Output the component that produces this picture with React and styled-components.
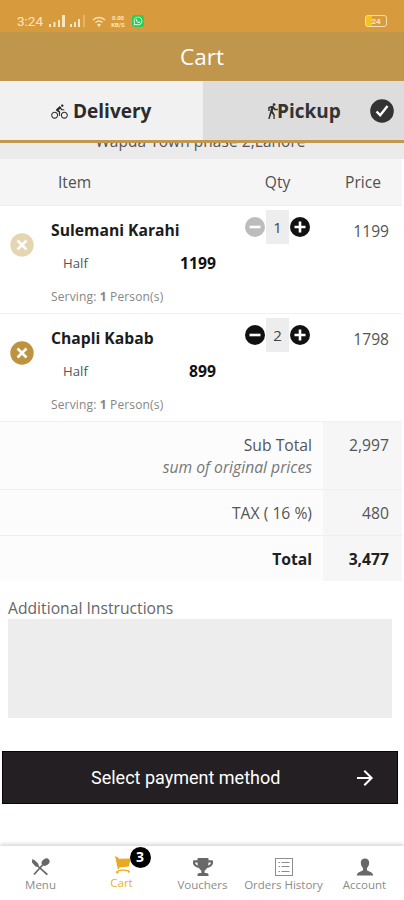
import React from "react";
import styled, { createGlobalStyle } from "styled-components";
import { IoMdBicycle, IoMdWalk, IoMdArrowForward } from "react-icons/io";
import { FaTrophy, FaWhatsapp } from "react-icons/fa";

const GlobalStyle = createGlobalStyle`
  * {
    box-sizing: border-box;
  }
  body {
    margin: 0;
    background: #ffffff;
    font-family: "Open Sans", "Noto Sans", sans-serif;
    color: #555555;
  }
`;

const Screen = styled.div`
  width: 404px;
  height: 900px;
  display: flex;
  flex-direction: column;
  overflow: hidden;
  background: #ffffff;
`;

const StatusBar = styled.div`
  height: 32px;
  flex: none;
  display: flex;
  align-items: center;
  padding: 10px 17px 0;
  background: #d79b3d;
  color: #fbe6bd;
`;

const Clock = styled.span`
  width: 32px;
  font-family: Roboto, sans-serif;
  font-size: 13.5px;
  line-height: 14px;
`;

const Signals = styled.svg`
  width: 58px;
  height: 16px;
`;

const NetSpeed = styled.span`
  display: flex;
  flex-direction: column;
  align-items: center;
  width: 16px;
  margin-left: 3px;
  font-family: Roboto, sans-serif;
  font-size: 6px;
  font-weight: 700;
  line-height: 7px;
`;

const WhatsappBadge = styled.span`
  display: flex;
  align-items: center;
  justify-content: center;
  width: 12px;
  height: 12px;
  margin-left: 6px;
  border-radius: 3px;
  background: #26cf56;
  color: #ffffff;
  font-size: 10px;
`;

const Battery = styled.span`
  display: flex;
  align-items: center;
  justify-content: center;
  width: 22px;
  height: 12px;
  margin-left: auto;
  border: 1px solid #f7dfae;
  border-radius: 3px;
  background: linear-gradient(90deg, #f2c31c 30%, transparent 30%);
  font-family: Roboto, sans-serif;
  font-size: 8px;
  font-weight: 700;
`;

const TitleBar = styled.h1`
  height: 49px;
  flex: none;
  margin: 0;
  background: #c0964c;
  color: #ffffff;
  font-size: 22.5px;
  font-weight: 400;
  line-height: 49px;
  text-align: center;
`;

const Tabs = styled.div`
  display: grid;
  grid-template-columns: 203px 201px;
  height: 62px;
  flex: none;
  border-bottom: 3px solid #c3984e;
`;

const Tab = styled.div`
  display: flex;
  align-items: center;
  padding: 1px ${(props) => (props.$active ? "10px 0 61px" : "0 0 50px")};
  background: ${(props) => (props.$active ? "#dddddd" : "#f1f1f1")};
  color: ${(props) => (props.$active ? "#333333" : "#2b2b2b")};
  font-size: 19px;
  font-weight: 700;

  svg {
    flex: none;
  }
`;

const TabLabel = styled.span`
  margin-left: ${(props) => props.$gap || 0}px;
`;

const TabCheck = styled.svg`
  width: 24px;
  height: 24px;
  margin-left: auto;
`;

const Address = styled.div`
  display: flex;
  align-items: flex-end;
  justify-content: center;
  height: 16px;
  flex: none;
  padding: 0 3px 8px 0;
  overflow: hidden;
  background: #ebebeb;
  color: #555555;
  font-size: 15.4px;
  line-height: 18px;
  letter-spacing: 0.1px;
`;

const Table = styled.div`
  width: 402px;
  flex: none;
`;

const TableHead = styled.div`
  display: grid;
  grid-template-columns: 58px 179px 81px 84px;
  align-items: center;
  height: 47px;
  border-bottom: 1px solid #f0f0f0;
  background: #f5f5f5;
  color: #505050;
  font-size: 15.6px;
`;

const HeadCell = styled.span`
  padding-left: ${(props) => props.$inset || 0}px;
  text-align: ${(props) => props.$align || "left"};
`;

const ItemRow = styled.div`
  display: grid;
  grid-template-columns: 51px 165px 103px 83px;
  height: 108px;
  border-bottom: 1px solid #f0f0f0;
`;

const RemoveCell = styled.div`
  padding: 27px 0 0 10px;

  svg {
    display: block;
  }
`;

const ItemInfo = styled.div`
  padding-top: 13px;
`;

const ItemName = styled.div`
  color: #1c1c1c;
  font-size: 15.7px;
  font-weight: 700;
  line-height: 22px;
  white-space: nowrap;
`;

const Portion = styled.div`
  display: flex;
  align-items: center;
  justify-content: space-between;
  height: 22px;
  margin-top: 11px;
  padding-left: 12px;
  font-size: 13.2px;
`;

const PortionPrice = styled.strong`
  color: #111111;
  font-size: 15.7px;
`;

const Serving = styled.div`
  margin-top: 15px;
  color: #868686;
  font-size: 12px;
  line-height: 16px;
  letter-spacing: 0.15px;
`;

const Stepper = styled.div`
  display: flex;
  align-items: flex-start;
  padding: 4px 0 0 29px;

  svg {
    flex: none;
    margin-top: 7px;
  }
`;

const Quantity = styled.span`
  width: 23px;
  height: 34px;
  margin: 0 1px;
  background: #ededed;
  color: #444444;
  font-size: 15px;
  line-height: 34px;
  text-align: center;
`;

const LinePrice = styled.div`
  padding: 14px 13px 0 0;
  font-size: 15.6px;
  line-height: 22px;
  text-align: right;
`;

const TotalRow = styled.div`
  display: grid;
  grid-template-columns: 323px 79px;
  height: ${(props) => props.$height}px;
  border-bottom: ${(props) => (props.$strong ? 0 : 1)}px solid #efefef;
  background: #fcfcfc;
  color: ${(props) => (props.$strong ? "#202020" : "#555555")};
  font-size: 15.7px;
  font-weight: ${(props) => (props.$strong ? 700 : 400)};
  line-height: 22px;
`;

const TotalLabel = styled.div`
  padding: 12px 11px 0 0;
  text-align: right;
`;

const TotalValue = styled.div`
  padding: 12px 13px 0 0;
  background: #f6f6f6;
  text-align: right;
`;

const Note = styled.em`
  display: block;
  color: #777777;
  font-size: 15.7px;
`;

const Instructions = styled.label`
  display: block;
  flex: none;
  padding: 16px 12px 0 8px;
  color: #666666;
  font-size: 15.7px;
  line-height: 22px;
`;

const InstructionsInput = styled.textarea`
  display: block;
  width: 384px;
  height: 99px;
  border: 0;
  background: #ededed;
  outline: none;
  resize: none;
`;

const PaymentButton = styled.button`
  display: grid;
  grid-template-columns: 1fr 24px;
  align-items: center;
  width: 396px;
  height: 53px;
  flex: none;
  margin: 33px 0 0 2px;
  padding: 0 20px 0 0;
  border: 1px solid #080608;
  background: #241f22;
  color: #ffffff;
  font-family: Roboto, sans-serif;
  font-size: 18px;
  text-align: left;
`;

const PaymentLabel = styled.span`
  padding-left: 88px;
`;

const BottomNav = styled.nav`
  display: grid;
  grid-template-columns: repeat(5, 81px);
  height: 54px;
  flex: none;
  margin-top: auto;
  background: #ffffff;
  box-shadow: 0 -2px 4px rgba(0, 0, 0, 0.16);
`;

const NavItem = styled.div`
  display: flex;
  flex-direction: column;
  align-items: center;
  padding-top: ${(props) => (props.$active ? 8 : 10)}px;
  color: ${(props) => (props.$active ? "#e9b02c" : "#8b8b8b")};
  font-size: 11.5px;
  line-height: 16px;
  white-space: nowrap;
`;

const NavIcon = styled.div`
  display: flex;
  align-items: center;
  justify-content: center;
  position: relative;
  width: 24px;
  height: 21px;
  color: ${(props) => (props.$active ? "#e9a922" : "#686868")};
`;

const Badge = styled.span`
  position: absolute;
  top: -7px;
  left: 20px;
  width: 21px;
  height: 21px;
  border-radius: 50%;
  background: #000000;
  color: #ffffff;
  font-size: 14px;
  font-weight: 700;
  line-height: 20px;
  text-align: center;
`;

const SignalIcons = () => (
  <Signals viewBox="0 0 58 16" fill="currentColor">
    <path d="M0 11h2v3H0zM4.500 9h2v5h-2zM9 7h2v7H9zM13 2h3v12h-3z" />
    <path d="M21 11h2v3h-2zM25 9h2v5h-2zM29 6h2v8h-2z" />
    <path d="M34 2h2v12h-2z" opacity="0.35" />
    <g fill="none" stroke="currentColor" strokeWidth="1.500">
      <path d="M44 7c3.500-3.200 8.500-3.200 12 0M46.500 9.500c2.200-1.800 4.800-1.800 7 0" />
    </g>
    <path d="M48 11.500c1.300-1 2.700-1 4 0l-2 2.500z" />
  </Signals>
);

const CloseIcon = ({ faded }) => (
  <svg width="24" height="24" viewBox="0 0 24 24">
    <circle cx="12" cy="12" r="11.700" fill={faded ? "#e5d5b2" : "#bd933f"} />
    <path d="M7.500 7.500l9 9m0-9l-9 9" stroke="#fff" strokeWidth="2.600" />
  </svg>
);

const StepIcon = ({ plus, disabled }) => (
  <svg width="20" height="20" viewBox="0 0 20 20">
    <circle cx="10" cy="10" r="10" fill={disabled ? "#bcbcbc" : "#111"} />
    <path
      d={plus ? "M4.500 10h11M10 4.500v11" : "M4.500 10h11"}
      stroke="#fff"
      strokeWidth="2.600"
    />
  </svg>
);

const MenuIcon = () => (
  <svg width="19" height="18" viewBox="0 0 19 18" fill="currentColor">
    <path d="M1.200 1L4 2.600 7.300 5.800 7.800 8 17 16 15.600 17.300 6.700 9 4.500 8.500 1 4.500z" />
    <ellipse cx="14.600" cy="4.100" rx="4.200" ry="3.300" transform="rotate(-35 14.600 4.100)" />
    <path d="M12.500 6L3 16.500" stroke="currentColor" strokeWidth="1.800" />
  </svg>
);

const CartIcon = () => (
  <svg width="20" height="20" viewBox="0 0 20 20" fill="currentColor">
    <path d="M2.500 1l3.800 1.400.4 1.300 12-.2L16.800 11.500 6.800 12.400 7.300 14H5.800L3.500 3z" />
    <path
      d="M5 17c1-2.300 8.500-2.600 12-.8"
      fill="none"
      stroke="currentColor"
      strokeWidth="1.200"
    />
    <circle cx="5.300" cy="17.200" r="1.200" />
    <circle cx="16.800" cy="16.700" r="1.100" />
  </svg>
);

const OrdersIcon = () => (
  <svg width="18" height="18" viewBox="0 0 18 18" fill="none" stroke="#8c8c8c">
    <rect x="0.500" y="0.500" width="17" height="17" />
    <path d="M3.500 4.500h1.500M3.500 8.500h1.500M3.500 13.500h1.500M6.500 4.500h8M6.500 8.500h8M6.500 13.500h8" />
  </svg>
);

const AccountIcon = () => (
  <svg width="18" height="18" viewBox="0 0 18 18" fill="currentColor">
    <path d="M9 0.500c2.700 0 4.200 1.700 4.200 4.300 0 2.200-1 4.100-2.200 5.100v2.200c0 1.200 5.700 1.500 6.300 5.400H.7c.6-3.900 6.300-4.200 6.300-5.400V9.900C5.800 8.900 4.800 7 4.800 4.800 4.800 2.200 6.300.5 9 .5z" />
  </svg>
);

const items = [
  { name: "Sulemani Karahi", price: 1199, quantity: 1, faded: true },
  { name: "Chapli Kabab", price: 899, quantity: 2 },
];

const navItems = [
  { label: "Menu", icon: <MenuIcon /> },
  { label: "Cart", icon: <CartIcon />, active: true, count: 3 },
  { label: "Vouchers", icon: <FaTrophy size={20} /> },
  { label: "Orders History", icon: <OrdersIcon /> },
  { label: "Account", icon: <AccountIcon /> },
];

const CartItem = ({ item }) => (
  <ItemRow>
    <RemoveCell>
      <CloseIcon faded={item.faded} />
    </RemoveCell>
    <ItemInfo>
      <ItemName>{item.name}</ItemName>
      <Portion>
        Half <PortionPrice>{item.price}</PortionPrice>
      </Portion>
      <Serving>
        Serving: <b>1</b> Person(s)
      </Serving>
    </ItemInfo>
    <Stepper>
      <StepIcon disabled={item.quantity === 1} />
      <Quantity>{item.quantity}</Quantity>
      <StepIcon plus />
    </Stepper>
    <LinePrice>{item.price * item.quantity}</LinePrice>
  </ItemRow>
);

const App = () => (
  <>
    <GlobalStyle />
    <Screen>
      <StatusBar>
        <Clock>3:24</Clock>
        <SignalIcons />
        <NetSpeed>
          <span>0.00</span>
          <span>KB/S</span>
        </NetSpeed>
        <WhatsappBadge>
          <FaWhatsapp />
        </WhatsappBadge>
        <Battery>24</Battery>
      </StatusBar>
      <TitleBar>Cart</TitleBar>
      <Tabs>
        <Tab>
          <IoMdBicycle size={19} />
          <TabLabel $gap={4}>Delivery</TabLabel>
        </Tab>
        <Tab $active>
          <IoMdWalk size={18} />
          <TabLabel $gap={-5}>Pickup</TabLabel>
          <TabCheck viewBox="0 0 24 24">
            <circle cx="12" cy="12" r="11.800" fill="#333" />
            <path
              d="M6.500 12.500l3.700 3.700L17.500 7"
              fill="none"
              stroke="#fff"
              strokeWidth="2.400"
            />
          </TabCheck>
        </Tab>
      </Tabs>
      <Address>Wapda Town phase 2,Lahore</Address>
      <Table>
        <TableHead>
          <span />
          <HeadCell>Item</HeadCell>
          <HeadCell $align="center">Qty</HeadCell>
          <HeadCell $align="center" $inset={6}>
            Price
          </HeadCell>
        </TableHead>
        {items.map((item) => (
          <CartItem key={item.name} item={item} />
        ))}
        <TotalRow $height={68}>
          <TotalLabel>
            Sub Total
            <Note>sum of original prices</Note>
          </TotalLabel>
          <TotalValue>2,997</TotalValue>
        </TotalRow>
        <TotalRow $height={46}>
          <TotalLabel>TAX ( 16 %)</TotalLabel>
          <TotalValue>480</TotalValue>
        </TotalRow>
        <TotalRow $height={45} $strong>
          <TotalLabel>Total</TotalLabel>
          <TotalValue>3,477</TotalValue>
        </TotalRow>
      </Table>
      <Instructions>
        Additional Instructions
        <InstructionsInput />
      </Instructions>
      <PaymentButton>
        <PaymentLabel>Select payment method</PaymentLabel>
        <IoMdArrowForward size={24} />
      </PaymentButton>
      <BottomNav>
        {navItems.map((item) => (
          <NavItem key={item.label} $active={item.active}>
            <NavIcon $active={item.active}>
              {item.icon}
              {item.count && <Badge>{item.count}</Badge>}
            </NavIcon>
            {item.label}
          </NavItem>
        ))}
      </BottomNav>
    </Screen>
  </>
);

export default App;
